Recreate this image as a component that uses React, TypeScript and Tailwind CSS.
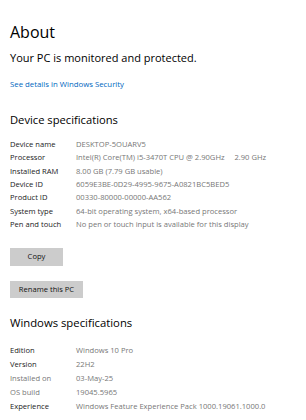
import React from 'react';

const device: [string, string][] = [
  ['Device name', 'DESKTOP-5OUARV5'],
  ['Processor', 'Intel(R) Core(TM) i5-3470T CPU @ 2.90GHz     2.90 GHz'],
  ['Installed RAM', '8.00 GB (7.79 GB usable)'],
  ['Device ID', '6059E3BE-0D29-4995-9675-A0821BC5BED5'],
  ['Product ID', '00330-80000-00000-AA562'],
  ['System type', '64-bit operating system, x64-based processor'],
  ['Pen and touch', 'No pen or touch input is available for this display'],
];

const windows: [string, string, boolean?][] = [
  ['Edition', 'Windows 10 Pro'],
  ['Version', '22H2'],
  ['Installed on', '03-May-25', true],
  ['OS build', '19045.5965', true],
  ['Experience', 'Windows Feature Experience Pack 1000.19061.1000.0'],
];

function SpecRows({
  rows,
  rowClass,
}: {
  rows: [string, string, boolean?][];
  rowClass: string;
}) {
  return (
    <div className="grid grid-cols-[66px_1fr] text-[7.6px]">
      {rows.map(([label, value, dim]) => (
        <React.Fragment key={label}>
          <div
            className={`${rowClass} whitespace-nowrap ${dim ? 'text-[#777]' : 'text-[#222]'}`}
          >
            {label}
          </div>
          <div className={`${rowClass} whitespace-pre text-[#777]`}>
            {value}
          </div>
        </React.Fragment>
      ))}
    </div>
  );
}

export default function App() {
  return (
    <div className="h-[420px] w-[306px] overflow-hidden bg-white pl-[10px] font-['Open_Sans',sans-serif] text-black">
      <h1 className="pt-[22px] text-[16px] leading-[20px]">About</h1>
      <p className="mt-[9px] text-[11px] leading-[14px]">
        Your PC is monitored and protected.
      </p>
      <a className="mt-[13px] block text-[7.8px] leading-[12px] text-[#0067c0]">
        See details in Windows Security
      </a>

      <h2 className="mt-[21.5px] text-[11.2px] leading-[16px]">
        Device specifications
      </h2>
      <div className="mt-[10.3px]">
        <SpecRows rows={device} rowClass="leading-[13.4px]" />
      </div>
      <button className="mt-[16.4px] block h-[18px] w-[53px] bg-[#cccccc] text-[7.6px] text-[#111]">
        Copy
      </button>
      <button className="mt-[15px] block h-[17px] w-[73px] bg-[#cccccc] text-[7.6px] text-[#111]">
        Rename this PC
      </button>

      <h2 className="mt-[17px] text-[11.3px] leading-[16px]">
        Windows specifications
      </h2>
      <div className="mt-[12px]">
        <SpecRows rows={windows} rowClass="leading-[14px]" />
      </div>
    </div>
  );
}
